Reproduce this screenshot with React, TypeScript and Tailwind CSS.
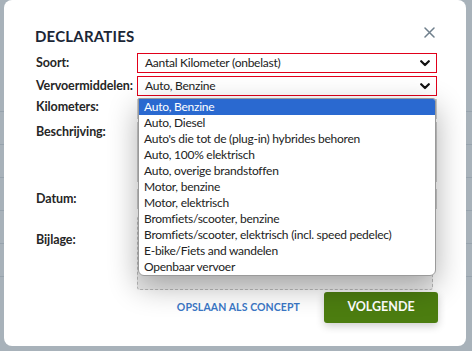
import React from "react";

const options = [
  "Auto, Benzine",
  "Auto, Diesel",
  "Auto's die tot de (plug-in) hybrides behoren",
  "Auto, 100% elektrisch",
  "Auto, overige brandstoffen",
  "Motor, benzine",
  "Motor, elektrisch",
  "Bromfiets/scooter, benzine",
  "Bromfiets/scooter, elektrisch (incl. speed pedelec)",
  "E-bike/Fiets and wandelen",
  "Openbaar vervoer",
];

function Chevron() {
  return (
    <svg width="10" height="7" viewBox="0 0 10 7" className="shrink-0">
      <path d="M1.2 1.2 L5 5 L8.8 1.2" fill="none" stroke="#111" strokeWidth="2.2" strokeLinecap="round" strokeLinejoin="round" />
    </svg>
  );
}

function Select({ value }: { value: string }) {
  return (
    <div className="flex h-[20px] w-[300px] items-center justify-between border border-[#e1001a] bg-white pl-[7px] pr-[6px] text-[12px] tracking-[-0.25px] text-[#222]">
      <span className="leading-4">{value}</span>
      <Chevron />
    </div>
  );
}

export default function App() {
  return (
    <div
      className="relative h-[351px] w-[472px] overflow-hidden bg-[#a8b2ba]"
      style={{ fontFamily: "Lato, 'Noto Sans', sans-serif" }}
    >
      {/* background hints */}
      <div className="absolute left-0 top-0 flex h-full w-full flex-col pt-[111px]">
        {[0, 1, 2, 3, 4, 5].map((i) => (
          <div key={i} className="h-[33px] border-t border-[#97a3ad]" />
        ))}
      </div>

      <div className="relative ml-[4px] flex h-[346px] w-[462px] flex-col rounded-[8px] bg-white pl-[31px] pr-[29px] pt-[26px]">
        <div className="flex h-[20px] items-center justify-between">
          <h1 className="text-[15px] font-bold leading-5 tracking-[0.2px] text-[#1b2636]">DECLARATIES</h1>
          <svg width="11" height="11" viewBox="0 0 11 11" className="mr-[2px] -mt-[8px]">
            <path d="M1 1 L10 10 M10 1 L1 10" stroke="#6f7f8c" strokeWidth="1.5" strokeLinecap="round" />
          </svg>
        </div>

        <div className="mt-[7px] flex flex-col text-[12.5px] tracking-[-0.1px] text-[#262626]">
          <div className="flex h-[20px] items-center">
            <div className="w-[102px] pl-[1px] font-bold leading-4">Soort:</div>
            <Select value="Aantal Kilometer (onbelast)" />
          </div>

          <div className="mt-[3px] flex h-[20px] items-center">
            <div className="w-[102px] pl-[1px] font-bold leading-4">Vervoermiddelen:</div>
            <div className="relative">
              <Select value="Auto, Benzine" />
              <ul className="absolute left-[1px] top-[22px] z-10 w-[298px] overflow-hidden rounded-b-[6px] rounded-tr-[3px] border border-[#9a9a9a] bg-white text-[12px] tracking-[-0.25px] shadow-[0_10px_30px_rgba(0,0,0,0.32)]">
                {options.map((o, i) => (
                  <li
                    key={o}
                    className={
                      i === 0
                        ? "h-[16px] bg-[#2a69d0] pl-[5px] leading-4 text-white"
                        : "h-[16px] pl-[5px] leading-4 text-[#222]"
                    }
                  >
                    {o}
                  </li>
                ))}
              </ul>
            </div>
          </div>

          <div className="mt-[3px] flex h-[20px] items-start">
            <div className="w-[102px] pl-[1px] font-bold leading-4">Kilometers:</div>
            <div className="h-[20px] w-[300px] border border-[#ccc]" />
          </div>

          <div className="mt-[3px] flex h-[60px] items-start">
            <div className="w-[102px] pl-[1px] pt-[2px] font-bold leading-4">Beschrijving:</div>
            <div className="h-[60px] w-[300px] border border-[#ccc]" />
          </div>

          <div className="mt-[3px] flex h-[28px] items-start">
            <div className="w-[102px] pl-[1px] pt-[6px] font-bold leading-4">Datum:</div>
            <div className="mt-[4px] h-[20px] w-[300px] border border-[#ccc]" />
          </div>

          <div className="mt-[3px] flex h-[74px] items-start">
            <div className="w-[102px] pl-[1px] pt-[16px] font-bold leading-4">Bijlage:</div>
            <div className="h-[74px] w-[296px] rounded-[3px] border border-dashed border-[#b9b9b9] bg-[#ececec]" />
          </div>
        </div>

        <div className="mt-[2px] flex items-center justify-end">
          <span className="mr-[24px] text-[10.5px] font-bold tracking-[0.1px] text-[#3b77c6]">OPSLAAN ALS CONCEPT</span>
          <button className="-mr-[1px] h-[31px] w-[114px] rounded-[3px] bg-[#4c7d10] text-[12.5px] font-bold text-white shadow-[0_3px_8px_rgba(0,0,0,0.2)]">
            VOLGENDE
          </button>
        </div>
      </div>
    </div>
  );
}
